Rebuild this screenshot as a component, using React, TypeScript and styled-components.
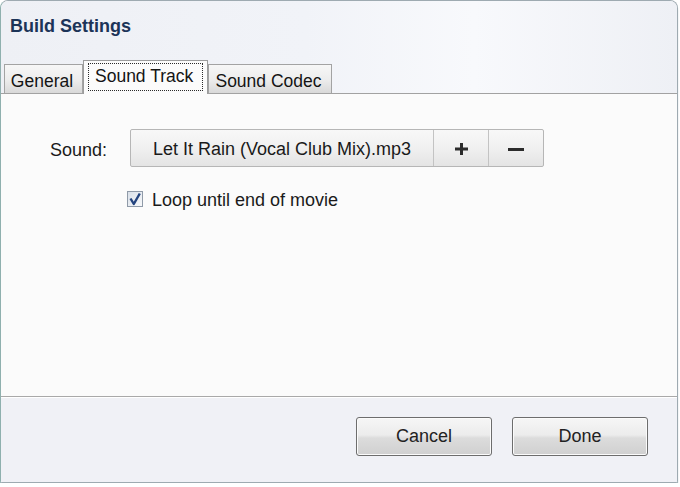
import styled, { createGlobalStyle } from 'styled-components';

const TABS = ['General', 'Sound Track', 'Sound Codec'];
const TAB_WIDTHS = [79, 125, 124];

function PlusIcon() {
  return (
    <svg width="13" height="12" viewBox="0 0 13 12">
      <rect x="0" y="4.5" width="13" height="3" fill="#2b2b2b" />
      <rect x="5" y="0" width="3" height="12" fill="#2b2b2b" />
    </svg>
  );
}

function MinusIcon() {
  return (
    <svg width="16" height="3" viewBox="0 0 16 3">
      <rect x="0" y="0" width="16" height="3" fill="#2b2b2b" />
    </svg>
  );
}

function CheckMark() {
  return (
    <svg width="14" height="14" viewBox="0 0 14 14">
      <path d="M2.5 6.5 L5.8 12 L11.8 1.5" fill="none" stroke="#24447f" strokeWidth="2.4" strokeLinejoin="round" />
    </svg>
  );
}

export default function App() {
  const selected = 1;

  return (
    <>
      <GlobalStyle />
      <Window>
        <Header>
          <Title>Build Settings</Title>
          <TabStrip>
            {TABS.map((tab, i) =>
              i === selected ? (
                <ActiveTab key={tab} $width={TAB_WIDTHS[i]}>
                  <FocusRing>{tab}</FocusRing>
                </ActiveTab>
              ) : (
                <Tab key={tab} $width={TAB_WIDTHS[i]}>
                  {tab}
                </Tab>
              ),
            )}
          </TabStrip>
        </Header>

        <Content>
          <SoundRow>
            <FieldLabel>Sound:</FieldLabel>
            <ButtonGroup>
              <Segment $width={303}>Let It Rain (Vocal Club Mix).mp3</Segment>
              <Segment $width={55}>
                <PlusIcon />
              </Segment>
              <Segment $width={54} $last>
                <MinusIcon />
              </Segment>
            </ButtonGroup>
          </SoundRow>
          <CheckRow>
            <CheckBox>
              <CheckMark />
            </CheckBox>
            <CheckLabel>Loop until end of movie</CheckLabel>
          </CheckRow>
        </Content>

        <Footer>
          <DialogButton>Cancel</DialogButton>
          <DialogButton>Done</DialogButton>
        </Footer>
      </Window>
    </>
  );
}

const GlobalStyle = createGlobalStyle`
  html, body {
    margin: 0;
    padding: 0;
    background: #ffffff;
  }

  body {
    font-family: "Liberation Sans", Arial, sans-serif;
    color: #1a1a1a;
  }
`;

const Window = styled.div`
  display: flex;
  flex-direction: column;

  box-sizing: border-box;
  width: 678px;
  height: 483px;
  border: 1px solid #9eaab1;
  border-left-color: #8fb0ae;
  border-radius: 8px 8px 2px 2px;
  overflow: hidden;

  box-shadow: 0 3px 1px #8ea7a9, 0 1px 0 #9fb7b8;
`;

const Header = styled.div`
  display: flex;
  flex-direction: column;
  justify-content: space-between;

  height: 93px;

  background: linear-gradient(90deg, #eef0f5 0%, #f1f3f8 45%, #f8f9fc 70%, #eef0f5 100%);
`;

const Title = styled.h1`
  margin: 0;
  padding: 14px 0 0 9px;

  font-size: 18px;
  font-weight: 700;
  line-height: 22px;
  color: #1c3458;
`;

const TabStrip = styled.div`
  display: flex;
  align-items: flex-end;

  height: 33px;
  padding-left: 3px;
  border-bottom: 1px solid #a2a2a2;
`;

const Tab = styled.div<{ $width: number }>`
  box-sizing: border-box;
  width: ${(p) => p.$width}px;
  height: 29px;
  padding: 6px 3px 0 0;
  border: 1px solid #a3a3a3;
  border-bottom: none;

  background: linear-gradient(180deg, #f7f7f7 0%, #ececec 55%, #d9d9d9 100%);

  font-size: 17.5px;
  line-height: 20px;
  text-align: center;
  color: #141414;
`;

const ActiveTab = styled.div<{ $width: number }>`
  position: relative;
  z-index: 1;

  box-sizing: border-box;
  width: ${(p) => p.$width}px;
  height: 34px;
  margin-bottom: -1px;
  padding: 2px 0 0 4px;
  border: 1px solid #9c9c9c;
  border-bottom: none;

  background: #fbfbfb;
`;

const FocusRing = styled.span`
  display: inline-block;
  padding: 2px 9px 4px 6px;
  border: 1px dotted #2a2a2a;

  font-size: 17.5px;
  line-height: 20px;
  color: #141414;
`;

const Content = styled.div`
  flex: 1;

  padding: 35px 0 0 49px;

  background: #fbfbfb;
`;

const SoundRow = styled.div`
  display: flex;
  align-items: center;
  gap: 23px;
`;

const FieldLabel = styled.span`
  padding-top: 3px;

  font-size: 18px;
  line-height: 20px;
  color: #1a1a1a;
`;

const ButtonGroup = styled.div`
  display: flex;

  height: 38px;
  box-sizing: border-box;
  border: 1px solid #b6b6b6;
  border-radius: 2px;

  background: linear-gradient(180deg, #f8f8f8 0%, #f0f0f0 50%, #e4e4e4 100%);
`;

const Segment = styled.div<{ $width: number; $last?: boolean }>`
  display: flex;
  justify-content: center;
  align-items: center;

  box-sizing: border-box;
  width: ${(p) => p.$width}px;
  padding-top: 2px;
  border-right: ${(p) => (p.$last ? 'none' : '1px solid #c3c3c3')};

  font-size: 18px;
  line-height: 20px;
  color: #1a1a1a;
`;

const CheckRow = styled.div`
  display: flex;
  align-items: center;
  gap: 9px;

  margin: 20px 0 0 77px;
`;

const CheckBox = styled.span`
  display: flex;
  justify-content: center;
  align-items: center;

  box-sizing: border-box;
  width: 16px;
  height: 16px;
  border: 1px solid #8f9aa8;

  background: linear-gradient(135deg, #d9e0e9 0%, #eef1f5 70%, #f7f8fa 100%);
`;

const CheckLabel = styled.span`
  padding-top: 3px;

  font-size: 18px;
  line-height: 20px;
  color: #1a1a1a;
`;

const Footer = styled.div`
  display: flex;
  justify-content: flex-end;
  align-items: flex-start;
  gap: 20px;

  box-sizing: border-box;
  height: 86px;
  padding: 20px 29px 0 0;
  border-top: 1px solid #a9a9a9;

  background: #f0f1f6;
  box-shadow: inset 0 1px 0 #ffffff;
`;

const DialogButton = styled.button`
  box-sizing: border-box;
  width: 136px;
  height: 39px;
  padding: 0;
  border: 1px solid #6d6d6d;
  border-radius: 3px;

  background: linear-gradient(180deg, #f6f6f6 0%, #ececec 46%, #dcdcdc 54%, #d0d0d0 100%);
  box-shadow: inset 0 0 0 1px #fbfbfb;

  font-family: "Liberation Sans", Arial, sans-serif;
  font-size: 18px;
  color: #222222;
`;
